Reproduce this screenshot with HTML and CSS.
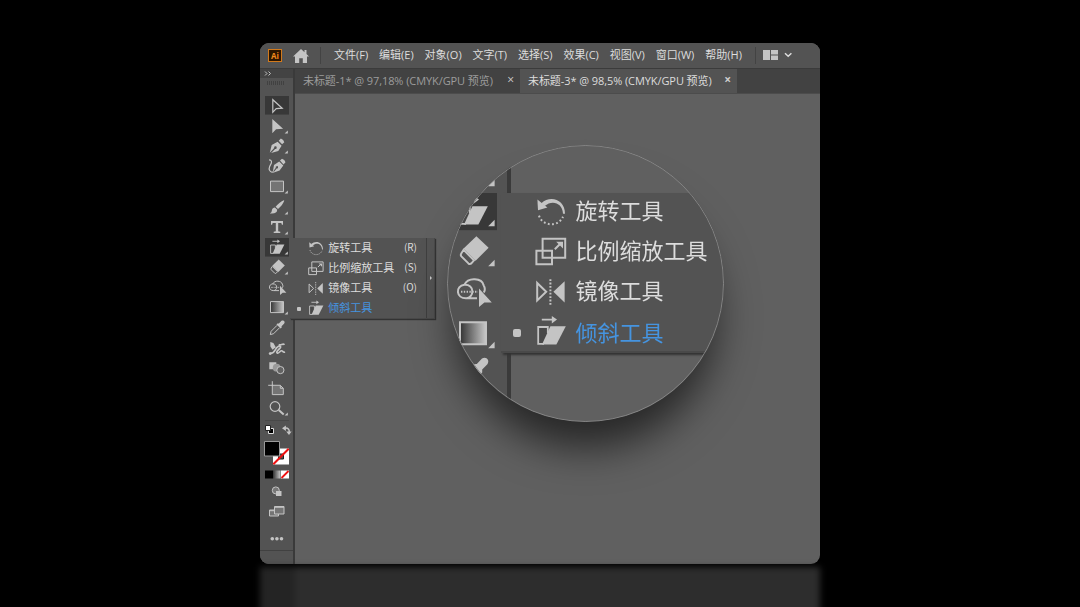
FILE: index.html
```html
<!DOCTYPE html>
<html lang="zh-CN">
<head>
    <meta charset="UTF-8">
    <meta name="viewport" content="width=device-width, initial-scale=1.0">
    <title>倾斜工具</title>
    <link rel="stylesheet" href="styles.css">
</head>
<body>
    <!-- tool icons, 24 x 20 each -->
    <svg class="sprite" xmlns="http://www.w3.org/2000/svg">
        <symbol id="more" viewBox="0 0 24 20"><path class="fill" d="M22.8 14.3v3.2h-3.2z"/></symbol>
        <symbol id="select" viewBox="0 0 24 20"><path class="line" stroke-width="1.2" d="M7.800 3.600v12.600l3.400-3.700 6-.4z"/></symbol>
        <symbol id="direct" viewBox="0 0 24 20"><path class="fill" d="M7.300 2.800v14.400l3.800-4.100 7-.5z"/></symbol>
        <symbol id="pen" viewBox="0 0 24 20">
            <path class="fill" d="M4.800 16.600 6.700 9l5.900-3.400 4 4-3.300 5.400-7.200 2 4-4.200a1.300 1.300 0 1 0-.9-.8zM13.700 4.700l2.200-2.300q2.800.9 3.400 3.800l-2.200 2z"/>
        </symbol>
        <symbol id="curve" viewBox="0 0 24 20">
            <path class="fill" d="M7.800 16 9 9l5.200-3.700 4.100 4.200-3.700 5-6.400 2.100 3.500-4.200a1.200 1.200 0 1 0-.9-.7zM15 4.500l2-1.900q2.800.5 3.500 3.500l-2 2.200z"/>
            <path class="line" stroke-width="1.200" d="M4 3.700c3 .2 3 2.500 1.700 4.600-1.500 2.500-2.200 5.400-.3 7 1.100.9 2.200.9 3.400.3"/>
        </symbol>
        <symbol id="rect" viewBox="0 0 24 20"><path class="line" fill="#747474" d="M5.500 5h13v10.500h-13z"/></symbol>
        <symbol id="brush" viewBox="0 0 24 20">
            <path class="fill" d="m18.700 3.100.6.6c-1.600 3.500-3.700 6.200-6.300 8.300l-2.400-2.300c2.500-2.900 5-5 8.100-6.600zM9.900 10.500l2.300 2.200c.1 3-3 4.400-7.500 3.600 1.800-.8 1.900-1.500 2.200-3.200.3-1.500 1.600-2.600 3-2.600z"/>
        </symbol>
        <symbol id="type" viewBox="0 0 24 20"><path class="fill" d="M6 4h12v3.600h-1.100L16.300 5.800H13.200v8.400l2.100.5v1.200H8.700v-1.200l2.100-.5V5.800H7.700L7.100 7.600H6z"/></symbol>
        <symbol id="skew" viewBox="0 0 24 20">
            <path fill="#484848" d="M5.500 7.900h5v3.500L7.700 16.200H5.500z"/>
            <path class="line" stroke-width=".9" d="M10.400 11V7.900H5.600v8.400h2.900"/>
            <path class="fill" d="M11.700 7.500h7.700l-4.700 9.200H7.500z"/>
            <path class="line" stroke-width=".9" d="M7.400 4.200h6"/>
            <path class="fill" d="m12.400 2.400 2.600 1.800-2.600 1.900z"/>
        </symbol>
        <symbol id="eraser" viewBox="0 0 24 20">
            <path class="fill" d="m13.700 2.500 6.100 5.800-6.500 6.500-6-6.200z"/>
            <path class="line" d="m7.300 9.300 5.200 5.300-1.300 1.500q-.8.6-1.500 0l-3.500-3.500q-.6-.7 0-1.600z"/>
        </symbol>
        <symbol id="shaper" viewBox="0 0 24 20">
            <path class="line" d="M14 13.500H8.800c-5.400.3-5.800-6.200-1.100-6.700 1.900-4 8.800-3.300 9.600.2.900 1.500.6 2.900.1 3.700M7.600 6.800c2.600-.2 4.100 1.300 4.100 3.300s-1.500 3.300-2.900 3.400"/>
            <path class="line" stroke-dasharray=".7 .7" d="M6 10.300h8.500"/>
            <path class="fill" d="m15 8.700 6.400 7h-3.700L15 17.900z"/>
        </symbol>
        <symbol id="gradient" viewBox="0 0 24 20"><path class="line" fill="url(#ramp)" d="M5.500 4.500h13v11h-13z"/></symbol>
        <symbol id="dropper" viewBox="0 0 24 20">
            <path class="fill" d="m12.400 5.500 1.500-.1 2.600-2.700c2-1.300 4.100.7 2.700 2.800l-2.600 2.600v1.500l-1 .9-4.100-4z"/>
            <path class="line" d="m12.100 7.200-6 6-.8 3.300 3.300-.9 6-6"/>
        </symbol>
        <symbol id="puppet" viewBox="0 0 24 20">
            <path class="fill" d="m5.300 4 3.100.9 2.400 4.300-3.300 2.500-2.100-3.300z"/>
            <path class="line" stroke-width="1.700" d="M4.800 15.300c4.700.5 4.900-3.500 7-5.800 2.300-2.500 5.200-1.600 3 .8s-3.900 3.600-2.600 4.600c1.500 1 3-2.600 4.600-2.200s1.200 2.100 3.200 1.100M13.700 6.400c1.900 1.700 4.500-1.900 5.600.3"/>
            <circle class="fill" cx="5.200" cy="15.500" r="1.400"/>
        </symbol>
        <symbol id="blend" viewBox="0 0 24 20">
            <path class="fill" d="M4.300 4.200h7v7h-7z"/>
            <circle cx="11.700" cy="9.600" r="3.900" fill="#999"/>
            <circle class="line" fill="#636363" cx="15.400" cy="12" r="3.600"/>
        </symbol>
        <symbol id="artboard" viewBox="0 0 24 20">
            <path class="line" fill="#747474" d="M7.300 7.200h8l3 3v6.300h-11z"/>
            <path class="line" d="M3.200 7.200h5M7.300 3.100v5M15.300 7.200v3h3"/>
        </symbol>
        <symbol id="loupe" viewBox="0 0 24 20">
            <circle class="line" stroke-width="1.200" cx="10" cy="8.400" r="4.800"/>
            <path class="line" stroke-width="2" d="m13.700 11.900 5 4.600"/>
        </symbol>
        <symbol id="rotate" viewBox="0 0 24 20">
            <path class="fill" d="M7.200 6c4.300-4.200 11.900-2 11.800 5.300h-1c-.2-5.500-5.400-7.200-9.200-3.900z"/>
            <path class="fill" d="m5.200 4.200 5 4-4.700 1.300z"/>
            <path class="line" stroke-dasharray=".9 1.200" d="M6 12.200c1.600 5.300 9.500 6 12 .6"/>
        </symbol>
        <symbol id="scale" viewBox="0 0 24 20">
            <path class="line" d="M7.800 3.800h11.300v9.500H7.800zM4.700 9.800h7.800v6.700H4.700zM13.900 9l3-3"/>
            <path class="fill" d="M14.600 5.300h3.400v3.400z"/>
        </symbol>
        <symbol id="reflect" viewBox="0 0 24 20">
            <path class="line" d="m5.100 5.900 4.500 4.400-4.500 4.300z"/>
            <path class="fill" d="M18.800 5v10.600l-5.600-5.300z"/>
            <path class="line" stroke-dasharray=".9 .8" d="M11.700 4v13"/>
        </symbol>
        <linearGradient id="ramp">
            <stop offset="0" stop-color="#333"/>
            <stop offset="1" stop-color="#c8c8c8"/>
        </linearGradient>
    </svg>

    <div class="app">
        <header class="menubar">
            <span class="logo">Ai</span>
            <svg class="home" viewBox="0 0 16 14"><path class="fill" d="M8 0 0 7.500h2V14h4.200V9.300h3.600V14H14V7.500h2L13.500 5V1h-2v2.300z"/></svg>
            <nav class="menu">
                <span>文件(F)</span>
                <span>编辑(E)</span>
                <span>对象(O)</span>
                <span>文字(T)</span>
                <span>选择(S)</span>
                <span>效果(C)</span>
                <span>视图(V)</span>
                <span>窗口(W)</span>
                <span>帮助(H)</span>
            </nav>
            <svg class="workspace" viewBox="0 0 30 10">
                <path class="fill" d="M0 0h7v10H0zM8 0h7v4.500H8zM8 5.500h7V10H8z"/>
                <path fill="none" stroke="#ddd" stroke-width="1.500" d="m22 3.300 3.200 3 3.200-3"/>
            </svg>
        </header>

        <div class="body">
            <aside class="toolbar">
                <div class="collapse"><svg viewBox="0 0 8 6"><path class="line" d="m1 1 2 2-2 2M4.500 1l2 2-2 2"/></svg></div>
                <div class="grip"></div>
                <div class="tools">
                    <svg class="tool active"><use href="#select"/></svg>
                    <svg class="tool"><use href="#direct"/><use href="#more"/></svg>
                    <svg class="tool"><use href="#pen"/><use href="#more"/></svg>
                    <svg class="tool"><use href="#curve"/></svg>
                    <svg class="tool"><use href="#rect"/><use href="#more"/></svg>
                    <svg class="tool"><use href="#brush"/><use href="#more"/></svg>
                    <svg class="tool"><use href="#type"/><use href="#more"/></svg>
                    <svg class="tool active"><use href="#skew"/><use href="#more"/></svg>
                    <svg class="tool"><use href="#eraser"/><use href="#more"/></svg>
                    <svg class="tool"><use href="#shaper"/></svg>
                    <svg class="tool"><use href="#gradient"/><use href="#more"/></svg>
                    <svg class="tool"><use href="#dropper"/></svg>
                    <svg class="tool"><use href="#puppet"/></svg>
                    <svg class="tool"><use href="#blend"/></svg>
                    <svg class="tool"><use href="#artboard"/></svg>
                    <svg class="tool"><use href="#loupe"/><use href="#more"/></svg>
                </div>
                <!-- fill / stroke, paint modes, screen mode -->
                <svg class="colors" viewBox="0 0 33 131">
                    <path fill="none" stroke="#484848" d="M5 1.500h24"/>
                    <path fill="#000" stroke="#ddd" d="M8.500 9.500h5v5h-5z"/>
                    <path fill="#fff" stroke="#222" d="M5.500 6.500h5v5h-5z"/>
                    <path class="line" stroke-width="1.500" d="M25 9.200c3-.5 4.600 1.500 4.200 4"/>
                    <path class="fill" d="m22 9.200 3.900-2.800v5.600zM26.200 12.500h5.400l-2.600 3.600z"/>
                    <path fill="#fff" d="M13 29.500h16v16H13z"/>
                    <path fill="#535353" stroke="#222" d="M18.500 35h5v5h-5z"/>
                    <path stroke="#e11" stroke-width="2" d="m13.300 45.200 15.400-15.400"/>
                    <path fill="#000" stroke="#999" d="M4.500 22.500h15v14.500h-15z"/>
                    <path fill="#000" d="M5 51.500h8v8H5z"/>
                    <path fill="url(#ramp)" d="M13 51.500h7.500v8H13z"/>
                    <path fill="#fff" d="M21 51.500h8v8h-8z"/>
                    <path stroke="#e11" stroke-width="1.800" d="m21.500 59 7-7"/>
                    <circle class="line" fill="#777" cx="15.800" cy="71.400" r="3.500"/>
                    <path class="fill" d="M16 72h5.500v5H16z"/>
                    <path class="line" fill="#747474" d="M9.500 91h9v6h-9z"/>
                    <path class="line" fill="#747474" d="M14.500 87.500H24V95h-9.500z"/>
                    <path class="line" d="M9.500 91.700h5M14.500 88.300H24"/>
                    <circle class="fill" cx="12.300" cy="119.800" r="1.800"/>
                    <circle class="fill" cx="16.900" cy="119.800" r="1.800"/>
                    <circle class="fill" cx="21.500" cy="119.800" r="1.800"/>
                </svg>
                <div class="toolbar-end"></div>
            </aside>

            <main class="document">
                <div class="tabs">
                    <div class="tab"><span>未标题-1* @ 97,18% (CMYK/GPU 预览)</span><i>×</i></div>
                    <div class="tab current"><span>未标题-3* @ 98,5% (CMYK/GPU 预览)</span><i>×</i></div>
                </div>
            </main>

            <div class="flyout">
                <ul>
                    <li><b></b><svg class="tool"><use href="#rotate"/></svg><span>旋转工具</span><kbd>(R)</kbd></li>
                    <li><b></b><svg class="tool"><use href="#scale"/></svg><span>比例缩放工具</span><kbd>(S)</kbd></li>
                    <li><b></b><svg class="tool"><use href="#reflect"/></svg><span>镜像工具</span><kbd>(O)</kbd></li>
                    <li class="chosen"><b></b><svg class="tool"><use href="#skew"/></svg><span>倾斜工具</span></li>
                </ul>
                <div class="tearoff"></div>
            </div>
        </div>

        <!-- magnifying lens -->
        <div class="lens">
            <div class="lens-view">
                <div class="lens-tools">
                    <svg class="tool"><use href="#type"/><use href="#more"/></svg>
                    <svg class="tool active"><use href="#skew"/><use href="#more"/></svg>
                    <svg class="tool"><use href="#eraser"/><use href="#more"/></svg>
                    <svg class="tool"><use href="#shaper"/></svg>
                    <svg class="tool"><use href="#gradient"/><use href="#more"/></svg>
                    <svg class="tool"><use href="#dropper"/></svg>
                </div>
                <div class="flyout">
                    <ul>
                        <li><b></b><svg class="tool"><use href="#rotate"/></svg><span>旋转工具</span></li>
                        <li><b></b><svg class="tool"><use href="#scale"/></svg><span>比例缩放工具</span></li>
                        <li><b></b><svg class="tool"><use href="#reflect"/></svg><span>镜像工具</span></li>
                        <li class="chosen"><b></b><svg class="tool"><use href="#skew"/></svg><span>倾斜工具</span></li>
                    </ul>
                </div>
            </div>
        </div>
    </div>
    <div class="reflection"></div>
</body>
</html>
```
FILE: styles.css
```css
* {
    box-sizing: border-box;
}
body {
    margin: 0;
    padding-top: 43px;
    height: 607px;
    overflow: hidden;
    background: #000;
    color: #ddd;
    font-family: "Open Sans", "Noto Sans CJK SC", sans-serif;
    font-size: 11px;
}
.sprite {
    position: absolute;
    width: 0;
    height: 0;
}
.fill {
    fill: #c4c4c4;
}
.line {
    stroke: #c4c4c4;
}
.line:not([fill]) {
    fill: none;
}
.app {
    position: relative;
    display: flex;
    flex-direction: column;
    margin: 0 auto;
    width: 560px;
    height: 521px;
    border-radius: 9px;
    background: #606060;
}

/* menu bar */
.menubar {
    display: flex;
    align-items: center;
    height: 26px;
    padding-left: 8px;
    background: #535353;
    border-bottom: 1px solid #3b3b3b;
    border-radius: 9px 9px 0 0;
}
.logo {
    width: 14px;
    height: 13px;
    border: 1px solid #d27a1c;
    background: #2b1500;
    color: #f08a1c;
    font-size: 8px;
    font-weight: 700;
    line-height: 11px;
    text-align: center;
}
.home {
    width: 16px;
    height: 14px;
    margin: 1px 11px 0 11px;
}
.menu {
    display: flex;
    justify-content: space-between;
    align-items: center;
    width: 436px;
    height: 17px;
    padding: 0 13px 3px 13px;
    border: solid #434343;
    border-width: 0 1px;
    margin-right: 7px;
    white-space: nowrap;
}
.workspace {
    width: 30px;
    height: 10px;
    margin-top: -2px;
}

/* toolbar */
.body {
    position: relative;
    display: flex;
    flex: 1;
}
.toolbar {
    display: flex;
    flex-direction: column;
    width: 35px;
    background: #535353;
    border-right: 2px solid #3a3a3a;
    border-radius: 0 0 0 9px;
}
.collapse {
    height: 9px;
    padding: 1px 0 0 4px;
    background: #434343;
}
.collapse svg {
    display: block;
    width: 8px;
    height: 7px;
}
.grip {
    width: 17px;
    height: 4px;
    margin: 3px 0 0 7px;
    background: repeating-linear-gradient(90deg, #414141 0 1px, #535353 1px 2px);
}
.tools {
    display: flex;
    flex-direction: column;
    padding: 10.6px 0 0 5px;
}
.tool {
    display: block;
    flex: none;
    width: 24px;
    height: 20.2px;
}
.tool.active {
    background: linear-gradient(#383838, #383838) center / 24px 18.6px no-repeat;
}
.colors {
    width: 33px;
    height: 131px;
}
.toolbar-end {
    flex: 1;
    border-top: 1px solid #414141;
}

/* tabs */
.document {
    flex: 1;
}
.tabs {
    display: flex;
    height: 25px;
    background: #424242;
    border-bottom: 1px solid #4c4c4c;
}
.tab {
    display: flex;
    justify-content: space-between;
    align-items: center;
    width: 225px;
    padding: 0 6px 3px 8px;
    color: #9c9c9c;
    letter-spacing: -.08px;
    white-space: nowrap;
}
.tab.current {
    width: 217px;
    background: #535353;
    color: #dcdcdc;
}
.tab i {
    font-style: normal;
    font-size: 12px;
    color: #ccc;
}
.tab.current i {
    font-weight: 700;
}

/* tool group menu */
.flyout {
    position: absolute;
    left: 30px;
    top: 169px;
    display: flex;
    width: 145px;
    height: 81px;
    background: #535353;
    border: solid #494949;
    border-width: 0 1px 1px 0;
    box-shadow: 1px 1px 1px #333;
    font-family: "Noto Sans CJK SC", sans-serif;
}
.flyout ul {
    flex: 1;
    margin: -.5px 0 0;
    padding: 0;
    list-style: none;
}
.flyout li {
    display: flex;
    align-items: center;
    height: 20.2px;
    padding-right: 9px;
    line-height: 18px;
    white-space: nowrap;
}
.flyout b {
    width: 4px;
    height: 4px;
    margin: 1px 3px 0 6.5px;
}
.flyout .chosen {
    color: #4594e0;
}
.flyout .chosen b {
    background: #c4c4c4;
    border-radius: 1px;
}
.flyout span {
    margin-left: .8px;
    padding-bottom: 2px;
}
.flyout kbd {
    margin-left: auto;
    padding-bottom: 1px;
    font-family: inherit;
    font-size: 10px;
}
.tearoff {
    display: flex;
    align-items: center;
    width: 8px;
    padding-left: 3px;
    border-left: 1px solid #3f3f3f;
}
.tearoff::before {
    content: "";
    border: solid transparent;
    border-width: 2px 0 2px 2px;
    border-left-color: #ccc;
}

/* lens */
.lens {
    position: absolute;
    left: 187px;
    top: 102px;
    width: 277px;
    height: 277px;
    overflow: hidden;
    border-radius: 50%;
    background: #606060;
    box-shadow: 0 34px 40px -8px rgba(0, 0, 0, .6);
}
.lens::after {
    content: "";
    position: absolute;
    inset: 0;
    border: 1px solid #858585;
    border-radius: 50%;
}
.lens-view {
    position: relative;
    width: 139px;
    height: 139px;
    transform: scale(2);
    transform-origin: 0 0;
}
.lens-tools {
    width: 32px;
    height: 139px;
    padding: 2.9px 0 0 1px;
    background: #535353;
    border-right: 2px solid #3a3a3a;
}
.lens .flyout {
    left: 26.5px;
    top: 23.7px;
    height: 80.5px;
}
.lens .flyout ul {
    margin-top: -.8px;
}
.lens .flyout b {
    margin-left: 6px;
}

/* floor under the window */
.reflection {
    width: 560px;
    height: 60px;
    margin: 3px auto 0;
    background: linear-gradient(90deg, #242424 0 35px, #2d2d2d 35px);
    filter: blur(3px);
}
```
